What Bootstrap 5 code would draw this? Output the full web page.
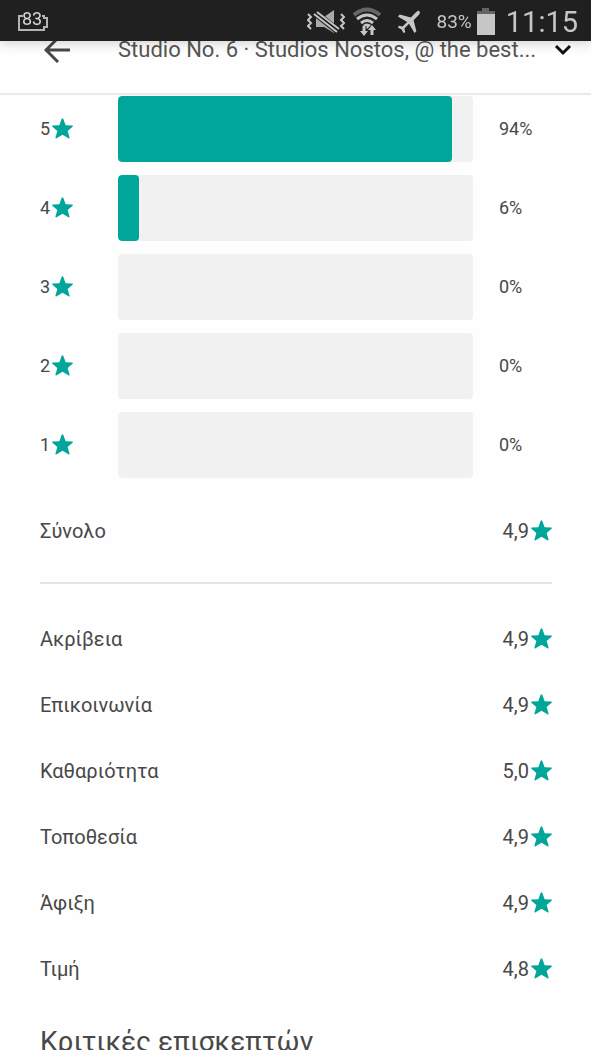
<!DOCTYPE html>
<html lang="el">
<head>
<meta charset="utf-8">
<meta name="viewport" content="width=device-width, initial-scale=1">
<title>Studio No. 6 · Κριτικές</title>
<link rel="stylesheet" href="https://cdn.jsdelivr.net/npm/bootstrap@5.3.0/dist/css/bootstrap.min.css">
<style>
  :root { --teal: #00a699; --ink: #484848; --line: #e4e4e4; --track: #f1f1f1; }
  body { font-family: Roboto, "Noto Sans", sans-serif; color: var(--ink); background: #fefefe; font-size: 20px; line-height: 26px; }
  .status-bar { height: 41px; background: #202020; color: #c6c6c6; box-shadow: 0 1px 12px rgba(0,0,0,.22); padding: 2px 13px 0 18px; }
  .status-pct { font-size: 19px; }
  .status-clock { font-size: 29px; line-height: 38px; margin-left: 10px; }
  .app-bar { padding: 6px 19px 0 40px; height: 95px; border-bottom: 2px solid #e9e9e9; }
  .app-bar button { color: var(--ink); line-height: 1; }
  .back-col { width: 78px; }
  .listing-title { font-size: 22px; line-height: 32px; color: #555; font-weight: 400; }
  .scroll-area { scrollbar-width: none; min-height: 0; padding: 1px 39px 0 40px; }
  .scroll-area::-webkit-scrollbar { display: none; }
  .histogram { gap: 13px; margin-bottom: 40px; }
  .side-col { width: 78px; font-size: 18px; }
  .pct-col { width: 79px; padding-left: 26px; }
  .progress.track { height: 66px; background: var(--track); border-radius: 4px; }
  .track .progress-bar { background: var(--teal); border-radius: 4px; }
  .star { width: 21px; height: 21px; fill: var(--teal); margin: 0 0 2px 2px; }
  .divider { border-top: 2px solid var(--line); opacity: 1; margin: 38px 0 42px; }
  .ratings { gap: 40px; }
  .reviews-heading { font-size: 28px; line-height: 36px; font-weight: 400; margin: 42px 0 24px; }
</style>
</head>
<body>
<svg class="d-none" aria-hidden="true">
  <symbol id="star" viewBox="0 0 20 20"><path d="M9.200.8Q10-.5 10.700.8L13 6.900l6.200.3q1.300.2.4 1.200L14.900 12.300l1.800 6.200q.2 1.500-1.100.9L10 16l-5.600 3.400q-1.300.6-1.100-.9l1.800-6.200L.4 8.400Q-.5 7.400.8 7.200L7 6.900z"/></symbol>
</svg>
<div class="vh-100 d-flex flex-column overflow-hidden">
  <div class="status-bar fixed-top d-flex align-items-center">
    <svg width="31" height="22" viewBox="0 0 31 22" overflow="visible" role="img" aria-label="83">
      <path d="M5 5H1v14h25v-3h3V7h-3V5h-2" fill="none" stroke="#b4b4b4" stroke-width="2"/>
      <text x="14" y="14" text-anchor="middle" font-size="18" fill="#d6d6d6">83</text>
    </svg>
    <svg class="ms-auto" width="38" height="26" viewBox="0 0 38 26" fill="none" stroke="#c6c6c6" aria-hidden="true">
      <path d="M1 5l3 3-3 3 3 3-3 3 3 3M34 5l3 3-3 3 3 3-3 3 3 3" stroke-width="2"/>
      <path d="M9 8h8l10-7v23l-10-6H9z" fill="#aaa" stroke="none"/>
      <path d="M7 3l24 19" stroke="#202020" stroke-width="7"/>
      <path d="M7 5l23 18M10 3l22 17" stroke-width="2"/>
    </svg>
    <svg class="ms-2" width="28" height="30" viewBox="0 0 28 30" fill="none" stroke="#c6c6c6" aria-hidden="true">
      <path d="M1 8Q14-3 27 8" stroke="#666" stroke-width="4"/>
      <path d="M4 12Q14 4 24 12M8 16Q14 11 20 16" stroke-width="3"/>
      <path d="M10 18q4-3 8 0l-4 4z" fill="#c6c6c6" stroke="none"/>
      <path d="M11 19v7M19 29v-8" stroke="#202020" stroke-width="5"/>
      <path d="M11 19v7M19 28v-7" stroke-width="3"/>
      <path d="M7 24h8l-4 5zM15 23h8l-4-5z" fill="#c6c6c6" stroke="none"/>
    </svg>
    <svg class="ms-3" width="24" height="24" viewBox="0 0 26 26" fill="#c6c6c6" aria-hidden="true">
      <path d="M24 1q2 2-1 5l-5 5 3 12-2 2-6-10-5 5 1 4-2 1-2-4-4-2 1-2 4 1 5-5L1 7l2-2 12 3 5-5q3-3 4-2z"/>
    </svg>
    <span class="status-pct ms-3">83%</span>
    <svg class="ms-1" width="20" height="27" viewBox="0 0 20 27" aria-hidden="true">
      <path d="M6 0h7v3h6v3H1V3h5z" fill="#646464"/><path d="M1 6h18v21H1z" fill="#c6c6c6"/>
    </svg>
    <time class="status-clock">11:15</time>
  </div>

  <header class="app-bar d-flex align-items-center flex-shrink-0">
    <div class="back-col flex-shrink-0 d-flex">
      <button type="button" class="btn p-0 border-0 ms-1" aria-label="Πίσω">
        <svg width="26" height="26" viewBox="0 0 26 26" fill="none" stroke="currentColor" stroke-width="3"><path d="M14 1L2 13l12 12M1 13h25"/></svg>
      </button>
    </div>
    <h1 class="listing-title mb-0 text-truncate flex-fill">Studio No. 6 · Studios Nostos, @ the best...</h1>
    <button type="button" class="btn p-0 border-0 flex-shrink-0" aria-label="Περισσότερα">
      <svg width="18" height="12" viewBox="0 0 18 12" fill="none" stroke="#111" stroke-width="3"><path d="M2 2l7 7 7-7"/></svg>
    </button>
  </header>

  <main class="scroll-area flex-fill overflow-auto">
    <section class="histogram d-flex flex-column">
      <div class="d-flex align-items-center"><div class="side-col d-flex align-items-center">5<svg class="star"><use href="#star"/></svg></div><div class="progress track flex-fill" role="progressbar" aria-valuenow="94" aria-valuemin="0" aria-valuemax="100"><div class="progress-bar" style="width:94%"></div></div><div class="side-col pct-col">94%</div></div>
      <div class="d-flex align-items-center"><div class="side-col d-flex align-items-center">4<svg class="star"><use href="#star"/></svg></div><div class="progress track flex-fill" role="progressbar" aria-valuenow="6" aria-valuemin="0" aria-valuemax="100"><div class="progress-bar" style="width:6%"></div></div><div class="side-col pct-col">6%</div></div>
      <div class="d-flex align-items-center"><div class="side-col d-flex align-items-center">3<svg class="star"><use href="#star"/></svg></div><div class="progress track flex-fill" role="progressbar" aria-valuenow="0" aria-valuemin="0" aria-valuemax="100"></div><div class="side-col pct-col">0%</div></div>
      <div class="d-flex align-items-center"><div class="side-col d-flex align-items-center">2<svg class="star"><use href="#star"/></svg></div><div class="progress track flex-fill" role="progressbar" aria-valuenow="0" aria-valuemin="0" aria-valuemax="100"></div><div class="side-col pct-col">0%</div></div>
      <div class="d-flex align-items-center"><div class="side-col d-flex align-items-center">1<svg class="star"><use href="#star"/></svg></div><div class="progress track flex-fill" role="progressbar" aria-valuenow="0" aria-valuemin="0" aria-valuemax="100"></div><div class="side-col pct-col">0%</div></div>
    </section>

    <div class="d-flex justify-content-between"><span>Σύνολο</span><span class="d-flex align-items-center">4,9<svg class="star"><use href="#star"/></svg></span></div>
    <hr class="divider">
    <ul class="ratings list-unstyled d-flex flex-column mb-0">
      <li class="d-flex justify-content-between"><span>Ακρίβεια</span><span class="d-flex align-items-center">4,9<svg class="star"><use href="#star"/></svg></span></li>
      <li class="d-flex justify-content-between"><span>Επικοινωνία</span><span class="d-flex align-items-center">4,9<svg class="star"><use href="#star"/></svg></span></li>
      <li class="d-flex justify-content-between"><span>Καθαριότητα</span><span class="d-flex align-items-center">5,0<svg class="star"><use href="#star"/></svg></span></li>
      <li class="d-flex justify-content-between"><span>Τοποθεσία</span><span class="d-flex align-items-center">4,9<svg class="star"><use href="#star"/></svg></span></li>
      <li class="d-flex justify-content-between"><span>Άφιξη</span><span class="d-flex align-items-center">4,9<svg class="star"><use href="#star"/></svg></span></li>
      <li class="d-flex justify-content-between"><span>Τιμή</span><span class="d-flex align-items-center">4,8<svg class="star"><use href="#star"/></svg></span></li>
    </ul>
    <h2 class="reviews-heading">Κριτικές επισκεπτών</h2>
  </main>
</div>
<script src="https://cdn.jsdelivr.net/npm/bootstrap@5.3.0/dist/js/bootstrap.bundle.min.js"></script>
</body>
</html>
